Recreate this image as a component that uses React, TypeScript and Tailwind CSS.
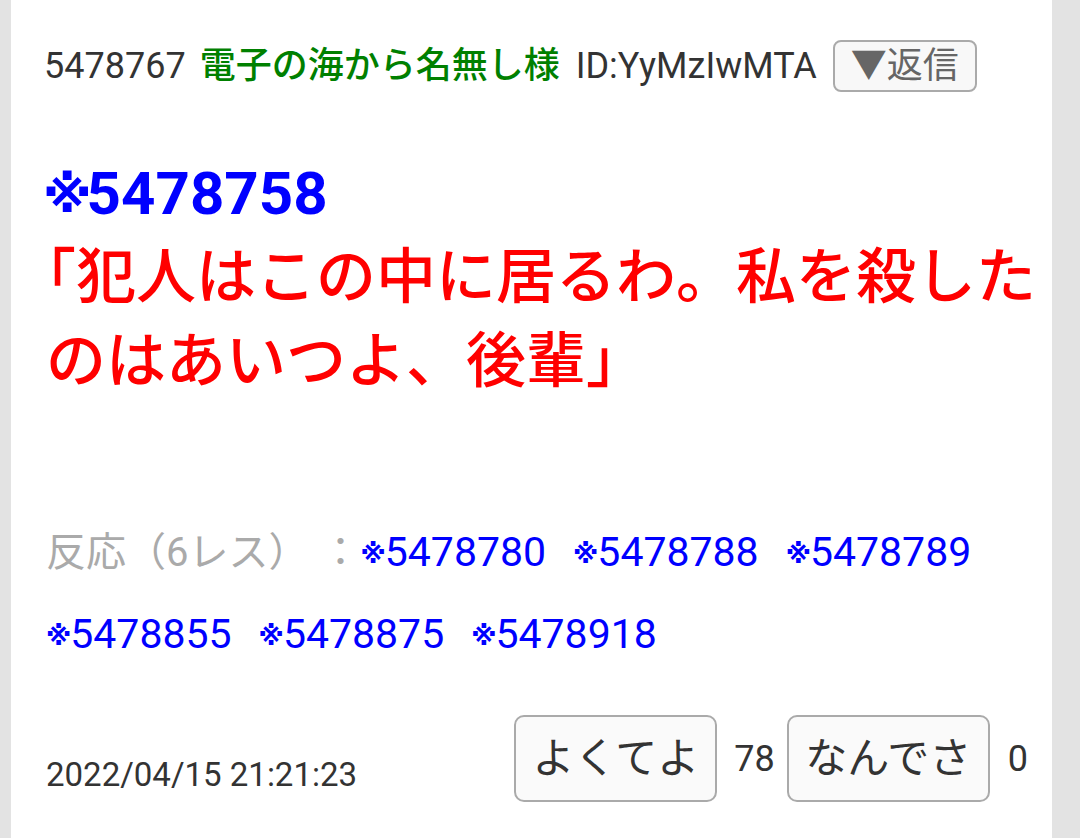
import React from "react";

const font = { fontFamily: "Roboto, 'Noto Sans CJK JP', sans-serif" };

function BigMark() {
  return (
    <span className="-ml-[3px] align-[2px] font-['DejaVu_Sans','Noto_Sans_CJK_JP',sans-serif] text-[50px] font-bold tracking-[-5px]">
      ※
    </span>
  );
}

function Mark() {
  return (
    <span className="align-[3px] font-['DejaVu_Sans','Noto_Sans_CJK_JP',sans-serif] text-[26px] font-bold tracking-[-1px]">
      ※
    </span>
  );
}

export default function App() {
  const links1 = ["5478780", "5478788", "5478789"];
  const links2 = ["5478855", "5478875", "5478918"];
  return (
    <div className="min-h-[838px] w-[1080px] bg-[#e3e3e3] pl-[11px] pr-[28px]" style={font}>
      <div className="min-h-[838px] bg-white pl-[35px] pr-[6px] pt-[40px] text-[#333333]">
        {/* header */}
        <div className="flex h-[52px] items-center text-[36px] leading-[52px]">
          <span className="-ml-[2px]">5478767</span>
          <span className="ml-[14px] font-medium text-[#008000]">電子の海から名無し様</span>
          <span className="ml-[16px]">ID:YyMzIwMTA</span>
          <button className="ml-[16px] flex h-[52px] items-center rounded-[8px] border-2 border-[#aaaaaa] bg-[#f8f8f8] px-[16px] text-[36px] leading-none text-[#666666]">
            ▼返信
          </button>
        </div>

        {/* body */}
        <div className="mt-[60px] text-[60px] leading-[84px]">
          <div className="h-[84px] font-bold text-[#0000ff]">
            <BigMark />5478758
          </div>
          <div className="font-medium text-[#ff0000] [text-spacing-trim:trim-start]">
            「犯人はこの中に居るわ。私を殺したのはあいつよ、後輩」
          </div>
        </div>

        {/* reactions */}
        <div className="mt-[108px] text-[41px] leading-[50px]">
          <div className="flex h-[82px] items-center">
            <span className="text-[40px] text-[#aaaaaa]">反応（6レス）</span>
            <span className="ml-[12px] text-[40px] text-[#aaaaaa]">：</span>
            {links1.map((l, i) => (
              <span key={l} className={`text-[#0000ff] ${i === 0 ? "ml-0" : "ml-[27px]"}`}>
                <Mark />{l}
              </span>
            ))}
          </div>
          <div className="flex h-[82px] items-center gap-[27px]">
            {links2.map((l) => (
              <span key={l} className="text-[#0000ff]">
                <Mark />{l}
              </span>
            ))}
          </div>
        </div>

        {/* footer */}
        <div className="mt-[39px] flex items-end justify-between">
          <span className="mb-[7px] text-[33px] leading-[40px]">2022/04/15 21:21:23</span>
          <div className="mr-[18px] flex items-center text-[36px]">
            <button className="flex h-[87px] w-[203px] items-center justify-center rounded-[10px] border-2 border-[#aaaaaa] bg-[#fafafa] text-[42px] text-[#333333]">
              よくてよ
            </button>
            <span className="ml-[17px] mr-[12px]">78</span>
            <button className="flex h-[87px] w-[203px] items-center justify-center rounded-[10px] border-2 border-[#aaaaaa] bg-[#fafafa] text-[42px] text-[#333333]">
              なんでさ
            </button>
            <span className="ml-[18px]">0</span>
          </div>
        </div>
      </div>
    </div>
  );
}
